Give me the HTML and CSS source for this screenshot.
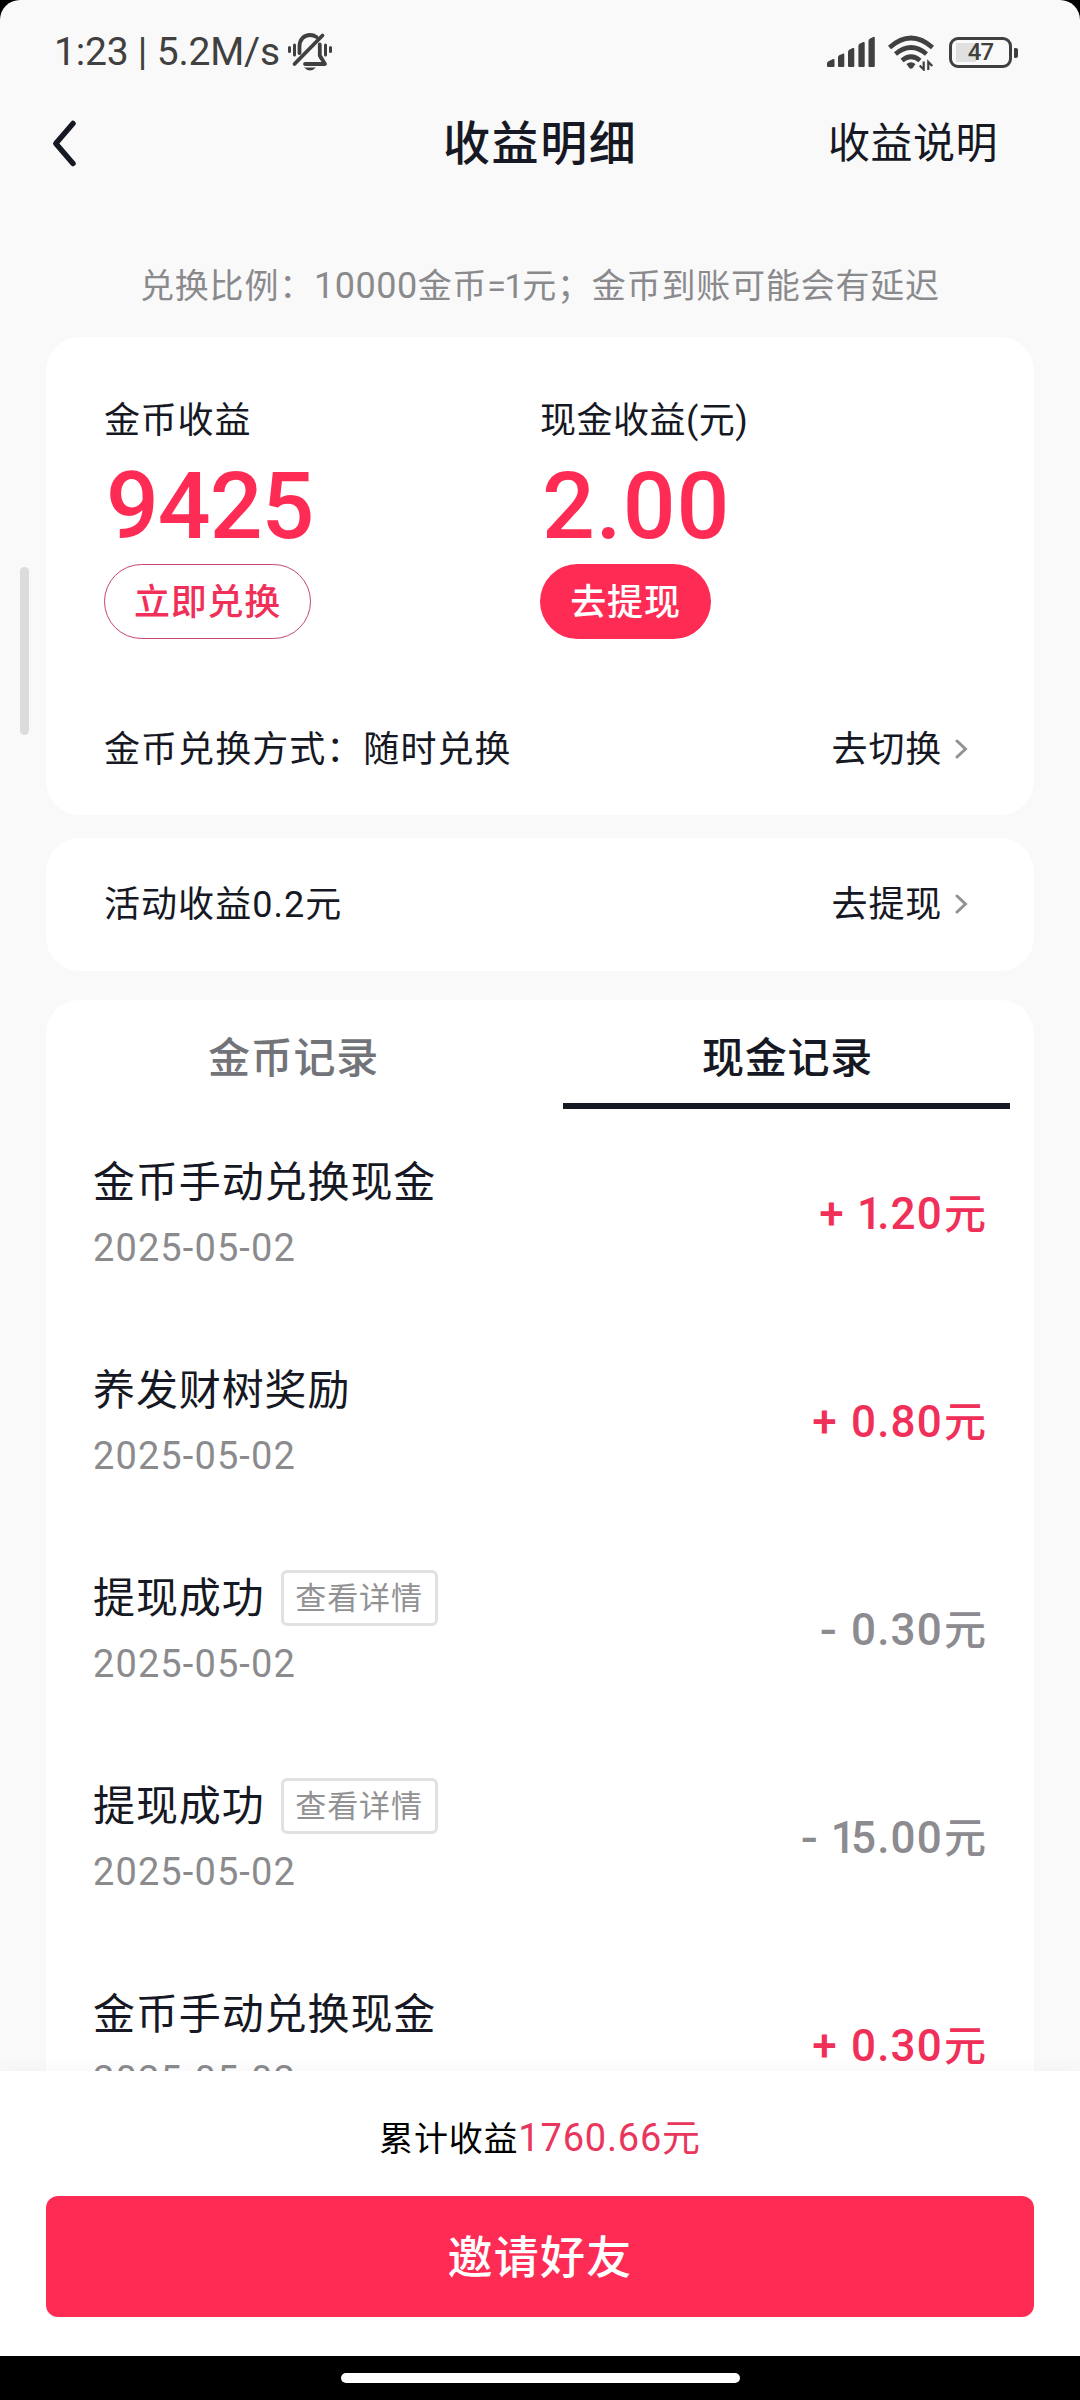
FILE: index.html
```html
<!DOCTYPE html>
<html lang="zh-CN">
<head>
<meta charset="utf-8">
<title>收益明细</title>
<link rel="stylesheet" href="styles.css">
</head>
<body>
<div class="screen">
  <div class="app">
    <div class="status">
      <span class="clock">1:23 | 5.2M/s</span>
      <svg class="bell" width="44" height="40" viewBox="288 33 44 40" fill="none" stroke="#404040" stroke-width="3.8" stroke-linecap="round" stroke-linejoin="round">
        <path d="M289.500 48.500v4M294.500 46v10" stroke-width="3"/>
        <path d="M325.500 46v10M330.500 48.500v4" stroke-width="3"/>
        <path d="M299.500 54V47.500c0-7 4.500-11.500 10.500-11.500 2.600 0 4.600.7 6.500 2M294.500 65L322.500 36.500"/>
        <path d="M319.800 45.500v11l5.200 8.500H305"/>
        <path d="M320.500 46.500v10l3 7.500q-5-5-5-9v-6.500z" fill="#404040" stroke-width="1"/>
        <path d="M304 68.500h12q-6 6-12 0z" fill="#404040" stroke="none"/>
      </svg>
      <div class="status-right">
        <svg width="48" height="32" viewBox="827 37 48 32" fill="#404040">
          <path d="M827 64.500q0-1.500 1.500-2.300l4.500-2.200q1.500-.5 1.500 1V67q0 1-1 1h-5.500q-1 0-1-1zM838 58.500q0-1.500 1.200-2.200l3.500-1.600q1.600-.5 1.600 1V67q0 1-1 1H839q-1 0-1-1zM848 53q0-1.500 1.200-2.300l3.500-1.600q1.600-.5 1.600 1V67q0 1-1 1H849q-1 0-1-1zM858.400 47q0-1.500 1.200-2.300l3.500-1.600q1.600-.5 1.600 1V67q0 1-1 1h-4.300q-1 0-1-1zM868.500 42q0-1.500 1.200-2.300l3.500-1.800q1.600-.5 1.600 1V67q0 1-1 1h-4.300q-1 0-1-1z"/>
        </svg>
        <svg class="wifi" width="48" height="37" viewBox="887 34 48 37" fill="none" stroke="#404040" stroke-width="4.600">
          <path d="M889.500 47.500q21.500-19 43 0M895.500 54q15.500-13 31 0M902 60.500q9-7.500 18 0"/>
          <path d="M906.500 64q4.500-3.500 9 0l-2.800 4q-1.700 1.500-3.400 0z" fill="#404040" stroke="none"/>
          <path d="M923.700 61.500V69.500l-4-4M928.300 70V62l4 4" stroke-width="2.200"/>
        </svg>
        <div class="battery"><span>47</span></div>
      </div>
    </div>
    <header class="nav">
      <svg class="back" width="26" height="50" viewBox="51 119 26 50" fill="none" stroke="#161823" stroke-width="5.500" stroke-linecap="round" stroke-linejoin="round"><path d="M73 123.500L55.800 143.500 73 163.500"/></svg>
      <h1>收益明细</h1>
      <a class="nav-link">收益说明</a>
    </header>
    <p class="hint">兑换比例：<span class="hint-num">10000</span>金币<span class="hint-rate">=1</span>元；金币到账可能会有延迟</p>
    <section class="card income">
      <div class="income-cols">
        <div class="col">
          <div class="label">金币收益</div>
          <div class="big coins">9425</div>
          <a class="pill outline">立即兑换</a>
        </div>
        <div class="col">
          <div class="label cash-label">现金收益(元)</div>
          <div class="big">2.00</div>
          <a class="pill solid">去提现</a>
        </div>
      </div>
      <div class="line">
        <span class="line-text">金币兑换方式：随时兑换</span>
        <a class="more">去切换<svg width="13" height="20" viewBox="0 0 13 20"><path d="M2 2L10.500 10 2 18"/></svg></a>
      </div>
    </section>
    <section class="card activity line">
      <span class="line-text">活动收益0.2元</span>
      <a class="more">去提现<svg width="13" height="20" viewBox="0 0 13 20"><path d="M2 2L10.500 10 2 18"/></svg></a>
    </section>
    <section class="card records">
      <div class="tabs">
        <div class="tab">金币记录</div>
        <div class="tab active">现金记录</div>
      </div>
      <div class="item">
        <div><div class="name">金币手动兑换现金</div><div class="date">2025-05-02</div></div>
        <div class="amount plus"><span class="sign">+</span><span class="one">1</span>.20<b>元</b></div>
      </div>
      <div class="item">
        <div><div class="name">养发财树奖励</div><div class="date">2025-05-02</div></div>
        <div class="amount plus"><span class="sign">+</span>0.80<b>元</b></div>
      </div>
      <div class="item">
        <div><div class="name">提现成功<span class="tag">查看详情</span></div><div class="date">2025-05-02</div></div>
        <div class="amount"><span class="sign minus">-</span>0.30<b>元</b></div>
      </div>
      <div class="item">
        <div><div class="name">提现成功<span class="tag">查看详情</span></div><div class="date">2025-05-02</div></div>
        <div class="amount"><span class="sign minus">-</span><span class="one">1</span>5.00<b>元</b></div>
      </div>
      <div class="item">
        <div><div class="name">金币手动兑换现金</div><div class="date">2025-05-02</div></div>
        <div class="amount plus"><span class="sign">+</span>0.30<b>元</b></div>
      </div>
    </section>
    <div class="edge-handle"></div>
  </div>
  <footer class="footer">
    <div class="total">累计收益<span>1760.66元</span></div>
    <a class="invite">邀请好友</a>
  </footer>
  <div class="home"><i></i></div>
</div>
</body>
</html>
```
FILE: styles.css
```css
* { box-sizing: border-box; margin: 0; padding: 0; }
body {
  width: 1080px;
  height: 2400px;
  background: #000;
  overflow: hidden;
  font-family: Roboto, "Noto Sans CJK SC", sans-serif;
  color: #161823;
}
.screen { display: flex; flex-direction: column; height: 2400px; }
.app {
  position: relative;
  height: 2071px;
  overflow: hidden;
  background: #f9f9f9;
  border-radius: 20px 20px 0 0;
}
.status {
  display: flex;
  align-items: center;
  height: 104px;
  padding: 0 62px 0 54px;
  color: #404040;
}
.clock { width: 226px; font-size: 39px; line-height: 106px; letter-spacing: -0.2px; white-space: nowrap; }
.bell { margin-left: 8px; }
.status-right { display: flex; align-items: center; margin-left: auto; }
.wifi { margin-left: 12px; }
.battery {
  position: relative;
  width: 63px;
  height: 31px;
  margin: 0 6px 0 14px;
  border: 3px solid #404040;
  border-radius: 9px;
  background: linear-gradient(#e0e0e0, #e0e0e0) 4px 3px / 20px 19px no-repeat;
  font: 500 24px/25px Roboto, sans-serif;
  letter-spacing: -1px;
  text-align: center;
}
.battery::after {
  content: "";
  position: absolute;
  right: -9px;
  top: 8px;
  width: 4px;
  height: 10px;
  border-radius: 1px 2px 2px 1px;
  background: #404040;
}
.nav {
  display: grid;
  grid-template-columns: 392px 1fr auto;
  align-items: center;
  height: 80px;
  padding: 0 82px 0 51px;
}
.nav h1 { font-size: 47px; font-weight: 500; line-height: 80px; letter-spacing: 1.6px; }
.nav-link { font-size: 42px; line-height: 80px; letter-spacing: 0.5px; }
.hint {
  height: 153px;
  padding: 78px 0 0 140px;
  font-size: 34px;
  line-height: 48px;
  letter-spacing: 0.8px;
  color: #8a8a8d;
  white-space: nowrap;
}
.hint-num { font-size: 36px; line-height: 1; letter-spacing: 0.5px; }
.hint-rate { letter-spacing: -1.4px; }
.card { margin: 0 46px; border-radius: 34px; background: #fff; }
.income { height: 478px; padding: 60px 58px 0; font-size: 36px; }
.income-cols { display: flex; height: 301px; }
.col { width: 436px; }
.label { font-size: 36px; line-height: 48px; letter-spacing: 0.8px; }
.cash-label { letter-spacing: 0.5px; }
.big {
  height: 119px;
  padding-left: 2px;
  font-size: 93px;
  font-weight: 500;
  line-height: 123px;
  letter-spacing: 1px;
  color: #fe2c55;
}
.coins { letter-spacing: -1px; }
.pill {
  display: flex;
  justify-content: center;
  align-items: center;
  width: 207px;
  height: 75px;
  padding-top: 2px;
  border-radius: 38px;
  font-weight: 500;
  font-size: 36px;
  letter-spacing: 0.8px;
  line-height: 72px;
}
.outline { border: 1px solid #c5476a; color: #f03058; }
.solid { width: 171px; background: #fe2c55; color: #fff; }
.line {
  display: flex;
  justify-content: space-between;
  align-items: center;
  font-size: 36px;
  line-height: 104px;
  letter-spacing: 0.8px;
}
.line-text { letter-spacing: 1.05px; }
.more { display: flex; align-items: center; }
.more svg { margin: -2px 8px 0 13px; fill: none; stroke: #929296; stroke-width: 3; stroke-linecap: round; }
.activity { height: 133px; margin-top: 23px; padding: 1px 58px 0; }
.records { height: 1200px; margin-top: 29px; }
.tabs { display: flex; height: 109px; }
.tab {
  flex: 1;
  margin: 0 24px 0 23px;
  padding-left: 2px;
  font-size: 42px;
  font-weight: 500;
  line-height: 118px;
  letter-spacing: 0.7px;
  text-align: center;
  color: #737479;
}
.active { border-bottom: 6px solid #161823; color: #161823; }
.item { display: flex; justify-content: space-between; height: 208px; padding: 42px 48px 0 47px; }
.name { display: flex; align-items: center; height: 64px; font-size: 42px; line-height: 64px; letter-spacing: 0.9px; }
.date { margin-top: 9px; font-size: 38px; line-height: 48px; letter-spacing: 1.1px; color: #8b8b8d; }
.tag {
  width: 157px;
  height: 56px;
  margin: -2px 0 0 16px;
  border: 3px solid #e1e1e1;
  border-radius: 6px;
  font-size: 31px;
  line-height: 51px;
  letter-spacing: 0.9px;
  text-align: center;
  color: #929294;
}
.amount {
  padding-top: 30px;
  font-size: 44px;
  font-weight: 500;
  line-height: 66px;
  letter-spacing: 1.2px;
  color: #8b8b90;
  white-space: nowrap;
}
.amount b { margin-left: 1px; font-size: 42px; font-weight: 500; letter-spacing: 0; }
.sign { margin-right: 13px; }
.minus { display: inline-block; margin-right: 14px; transform: scaleX(1.15); }
.one { margin: 0 -6px 0 -1px; }
.plus { color: #f03058; }
.edge-handle {
  position: absolute;
  left: 20px;
  top: 567px;
  width: 9px;
  height: 168px;
  border-radius: 5px;
  background: #dcdcdc;
}
.footer {
  position: relative;
  height: 285px;
  padding: 36px 46px 0;
  background: #fff;
  box-shadow: 0 -2px 18px rgba(0, 0, 0, 0.035);
}
.total {
  height: 89px;
  font-size: 34px;
  line-height: 64px;
  letter-spacing: 0.8px;
  text-align: center;
  color: #000;
}
.total span { font-size: 38px; line-height: 1; color: #e8365c; }
.invite {
  display: block;
  height: 121px;
  border-radius: 12px;
  background: #fe2c55;
  color: #fff;
  font-size: 45px;
  font-weight: 500;
  line-height: 126px;
  letter-spacing: 1.2px;
  text-align: center;
}
.home { display: flex; justify-content: center; height: 44px; padding-top: 17px; background: #000; }
.home i { width: 399px; height: 10px; border-radius: 5px; background: #fff; }
```
